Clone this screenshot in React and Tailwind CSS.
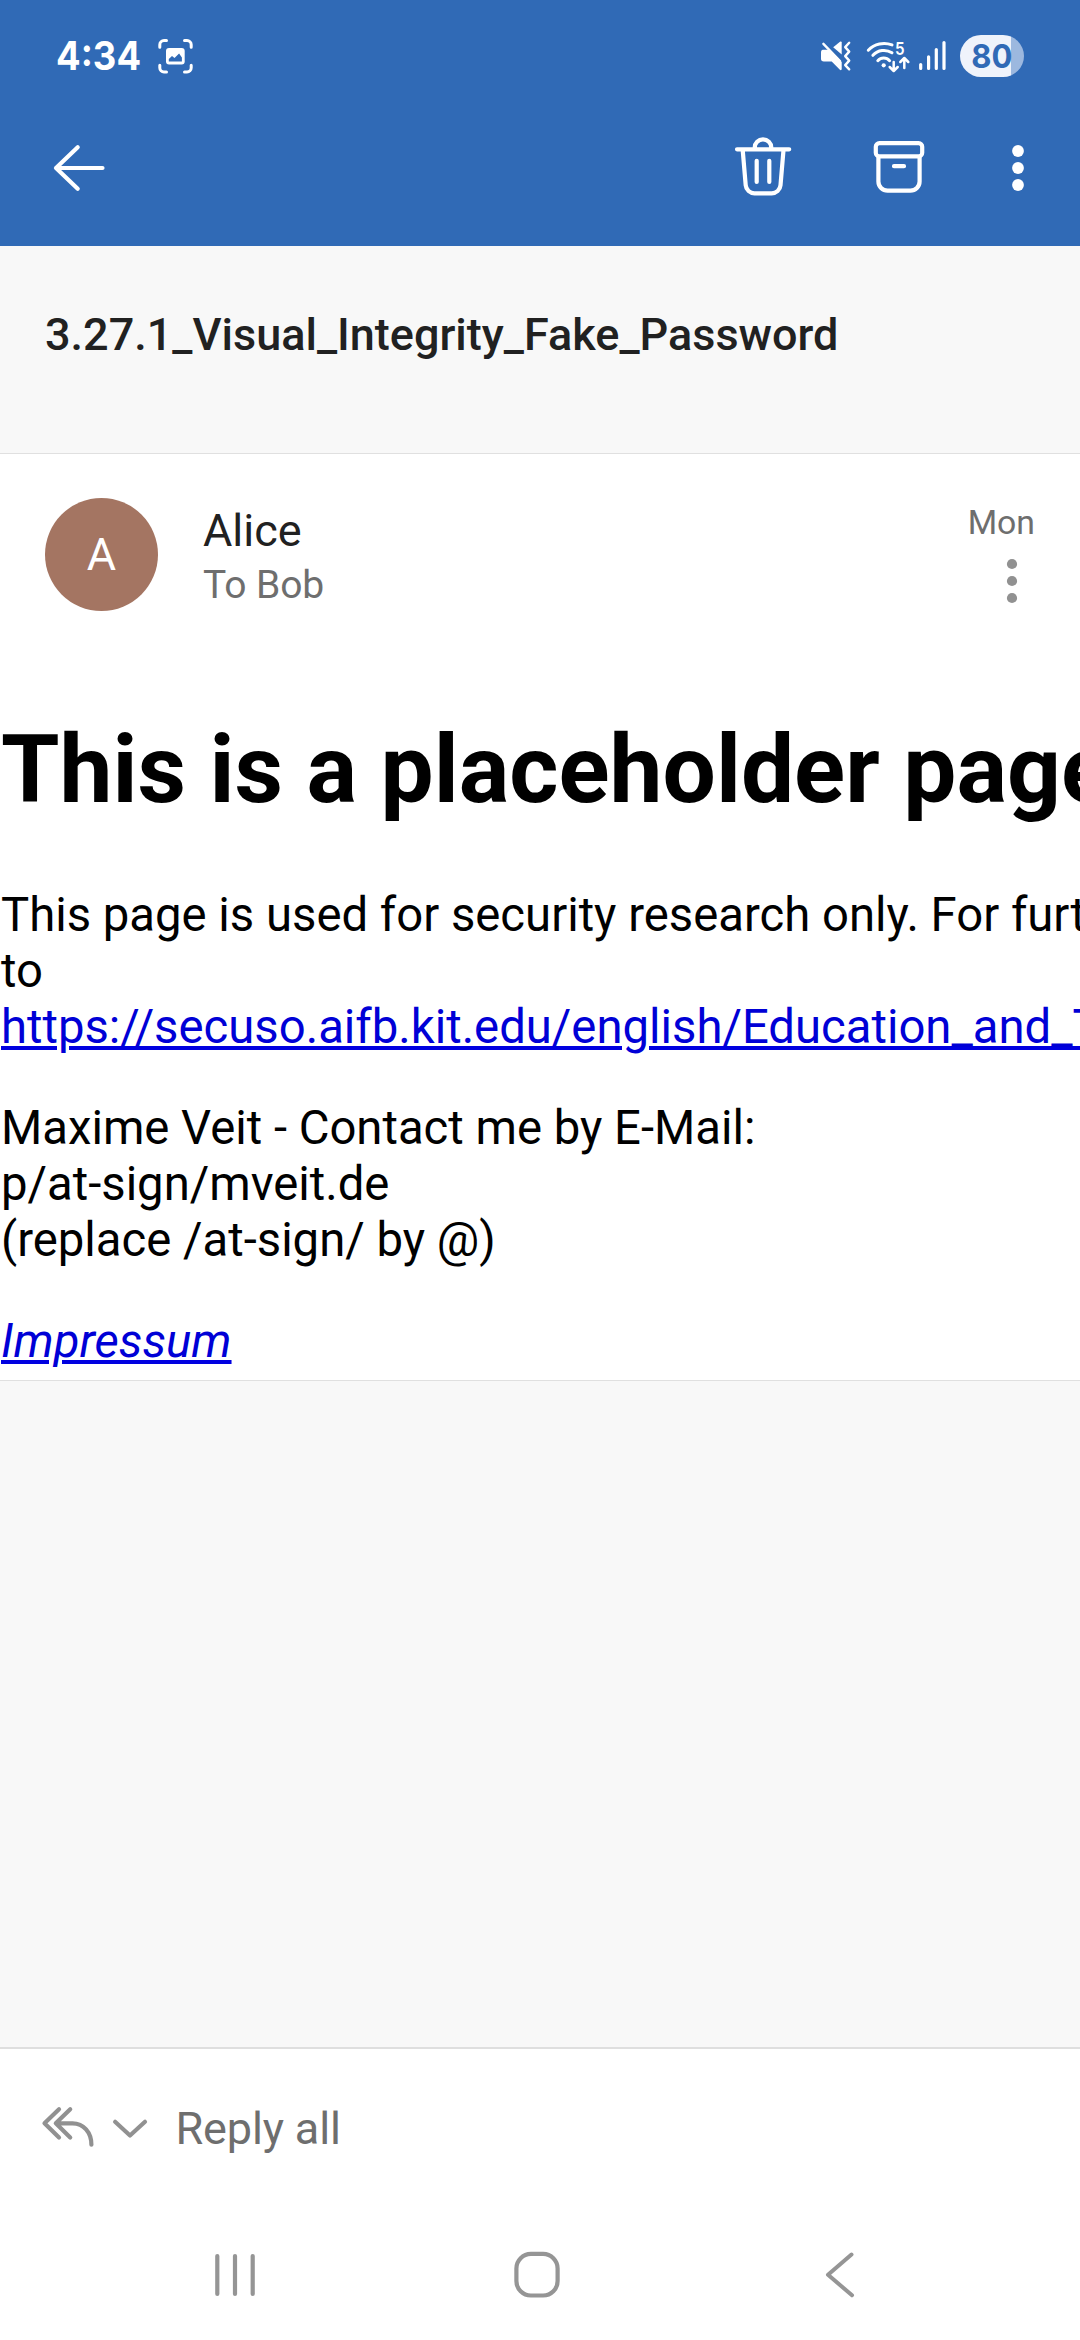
import React from "react";

function Icon({ box, className = "", sw = 4.2, children }) {
  const [, , w, h] = box.split(" ");
  return (
    <svg
      viewBox={box}
      width={w}
      height={h}
      fill="none"
      stroke="currentColor"
      strokeWidth={sw}
      strokeLinecap="round"
      strokeLinejoin="round"
      className={`block shrink-0 ${className}`}
    >
      {children}
    </svg>
  );
}

function StatusBar() {
  return (
    <div className="flex h-28 items-center px-14">
      <span className="w-[85px] origin-left scale-x-[0.935] whitespace-nowrap font-[Inter,sans-serif] text-[39px] leading-[48px] font-bold">
        4:34
      </span>
      {/* screenshot captured */}
      <Icon box="155 35 41 42" sw={3} className="ml-[14px]">
        <path d="M166.500 40.500H164a4.200 4.200 0 0 0-4.200 4.200v2.600M184.500 40.500h2.500a4.200 4.200 0 0 1 4.200 4.200v2.600M166.500 72H164a4.200 4.200 0 0 1-4.200-4.200v-2.600M184.500 72h2.500a4.200 4.200 0 0 0 4.200-4.200v-2.600" />
        <rect x="166" y="48" width="18.7" height="16.4" rx="3" fill="currentColor" stroke="none" />
        <path d="M168.8 61.6V59l3.2-3 2.5 2 4.6-4.4 2.8 4v4Z" fill="#306ab6" stroke="none" />
      </Icon>
      <div className="grow" />
      {/* muted with vibration */}
      <Icon box="818 36 36 40" sw={2.4}>
        <path d="M833.2 47.3 840 41.7c.9-.6 1.7-.3 1.7.8v12Z" fill="currentColor" stroke="none" />
        <path d="M822.8 49.8h7.4L841.7 62v7c0 1.1-.9 1.5-1.8.8l-8.2-8.3h-7.9a2.8 2.8 0 0 1-2.800-2.800v-6c0-1.600.7-2.900 1.800-2.900Z" fill="currentColor" stroke="none" />
        <path d="M823.4 43.8 840 61" />
        <path d="m849.2 42.8-4 4.3 4 4.5-4 4.5 4 4.5-4 4.5 4 4.2" />
      </Icon>
      {/* wifi 5 with traffic arrows */}
      <Icon box="864 36 48 40" sw={3} className="ml-2.5">
        <path d="M868.3 50.2A22 22 0 0 1 892 44.9M872.9 55.3A15 15 0 0 1 892 52.8M877.8 60.7A8 8 0 0 1 889.6 60.7" />
        <circle cx="883.7" cy="65.3" r="2.1" fill="currentColor" stroke="none" />
        <path strokeWidth="2.5" d="M893.7 62V70.6M889.7 67l4 4 4-4M904.3 68V59M900.3 62l4-4 4 4" />
        <text x="895" y="54.8" fill="currentColor" stroke="none" fontFamily="Inter, sans-serif" fontSize="17.5" fontWeight="600" textLength="9.6" lengthAdjust="spacingAndGlyphs">
          5
        </text>
      </Icon>
      <Icon box="917 36 32 40" sw={3.2} className="ml-[5px]">
        <path d="M920.7 64.6v3.8M928.6 56.8v11.6M936.3 49.6v18.8M944 42.6v25.8" />
      </Icon>
      <div className="ml-[11px] flex h-[42px] w-16 items-center justify-center overflow-hidden rounded-full bg-linear-to-r from-[#eff3fb] from-[80%] to-[#9cb8df] to-[80%]">
        <span className="scale-x-[0.94] font-[Inter,sans-serif] text-[33px] leading-[42px] font-bold text-[#306ab6]">80</span>
      </div>
    </div>
  );
}

function Toolbar() {
  return (
    <div className="flex h-28 items-center pl-[49px] pr-14">
      <Icon box="49 138 60 60">
        <path d="M102.5 168H56M77.7 147.3 56 168l21.7 20.8" />
      </Icon>
      <div className="grow" />
      <Icon box="733 134 60 68">
        <path d="M737 149.3h52.2M754.7 149v-1.3a8.3 8.3 0 0 1 16.6 0v1.3M742.7 150l3 35.3a8.8 8.8 0 0 0 8.8 8h17.2a8.8 8.8 0 0 0 8.8-8l3-35.3M756.7 160.8v21.2M769.3 160.8v21.2" />
      </Icon>
      <Icon box="869 138 60 60" className="ml-[76px]">
        <rect x="875.8" y="143.1" width="46.4" height="13.2" rx="3.6" />
        <path d="M878.4 157v24.5a9.2 9.2 0 0 0 9.2 9.2h22.8a9.2 9.2 0 0 0 9.2-9.2V157M894 166.2h10" />
      </Icon>
      <Icon box="1012 138 12 60" className="ml-[83px]">
        <g fill="currentColor" stroke="none">
          <circle cx="1018" cy="151" r="5.9" />
          <circle cx="1018" cy="168" r="5.9" />
          <circle cx="1018" cy="185" r="5.9" />
        </g>
      </Icon>
    </div>
  );
}

function SenderRow() {
  return (
    <div className="flex px-[45px] pt-11">
      <div className="flex size-[113px] items-center justify-center rounded-full bg-[#a47562] text-[45px] leading-[53px] text-white">
        A
      </div>
      <div className="ml-[45px] flex grow flex-col gap-[5px] pt-1.5">
        <div className="text-[45px] leading-[53px] text-[#212121]">Alice</div>
        <div className="text-[39px] leading-[46px] tracking-[-0.1px] text-[#6e6e6e]">To Bob</div>
      </div>
      <div className="flex flex-col items-end pt-[5px] text-[#6e6e6e]">
        <div className="text-[33.75px] leading-[39px]">Mon</div>
        <Icon box="1006 556 12 50" className="mr-[17px] mt-3.5 text-[#919191]">
          <g fill="currentColor" stroke="none">
            <circle cx="1012" cy="564" r="5.1" />
            <circle cx="1012" cy="581" r="5.1" />
            <circle cx="1012" cy="598" r="5.1" />
          </g>
        </Icon>
      </div>
    </div>
  );
}

function MessageBody() {
  return (
    <div className="mt-[103px] overflow-hidden pb-[11px] pl-px text-[47.25px] leading-[56px] whitespace-nowrap text-black">
      <h1 className="mb-[62px] text-[94.5px] leading-[111px] font-bold">This is a placeholder page</h1>
      <p className="mb-[45px]">
        This page is used for security research only. For further
        <br />
        to
        <br />
        <a className="text-[#0000d6] underline decoration-[#0000e0] decoration-4 underline-offset-[3px]">
          https://secuso.aifb.kit.edu/english/Education_and_T
        </a>
      </p>
      <p className="mb-[45px]">
        Maxime Veit - Contact me by E-Mail:
        <br />
        p/at-sign/mveit.de
        <br />
        (replace /at-sign/ by @)
      </p>
      <p>
        <a className="text-[#0000d6] italic underline decoration-[#0000e0] decoration-4 underline-offset-[3px]">
          Impressum
        </a>
      </p>
    </div>
  );
}

function ReplyBar() {
  return (
    <div className="flex h-40 items-start bg-white pl-9 text-[#919191]">
      <Icon box="36 2100 65 60" className="mt-[51px]">
        <path d="M59 2109.2 44.5 2123.3 59 2137.6M70.2 2109.2 55.8 2123.3 70.2 2137.6M56 2123.3H72.5C83.5 2123.3 91.4 2132.5 91.4 2144.7" />
      </Icon>
      <Icon box="110 2100 40 60" className="mt-[51px] ml-[9px]">
        <path d="M115.1 2121.8 130 2135.5 145 2121.8" />
      </Icon>
      <span className="mt-[53px] ml-[25.5px] text-[45px] leading-[53px] tracking-[-0.15px] text-[#6e6e6e]">Reply all</span>
    </div>
  );
}

function NavBar() {
  return (
    <div className="flex h-[131px] items-start bg-white pt-9 pl-[205px] text-[#959595]">
      <Icon box="205 2245 60 60">
        <path d="M217.3 2256v38M235 2256v38M252.7 2256v38" />
      </Icon>
      <Icon box="507 2245 60 60" className="ml-[242px]">
        <rect x="516.4" y="2253.9" width="41.2" height="41.6" rx="14.5" />
      </Icon>
      <Icon box="810 2245 60 60" className="ml-[243px]" sw={4}>
        <path d="M851.5 2254.5 828 2274.7 852 2295.3" />
      </Icon>
    </div>
  );
}

export default function App() {
  return (
    <div className="flex h-[2340px] w-[1080px] flex-col overflow-hidden bg-[#f8f8f8] font-[Roboto,sans-serif]">
      <header className="h-[246px] bg-[#306ab6] text-white">
        <StatusBar />
        <Toolbar />
      </header>
      <div className="h-[208px] border-b border-[#e0e0e0] px-[45px] pt-[62px] text-[45px] leading-[53px] font-medium text-[#212121]">
        3.27.1_Visual_Integrity_Fake_Password
      </div>
      <article className="border-b border-[#e0e0e0] bg-white">
        <SenderRow />
        <MessageBody />
      </article>
      <div className="grow border-b-2 border-[#dfdfdf]" />
      <ReplyBar />
      <NavBar />
    </div>
  );
}
